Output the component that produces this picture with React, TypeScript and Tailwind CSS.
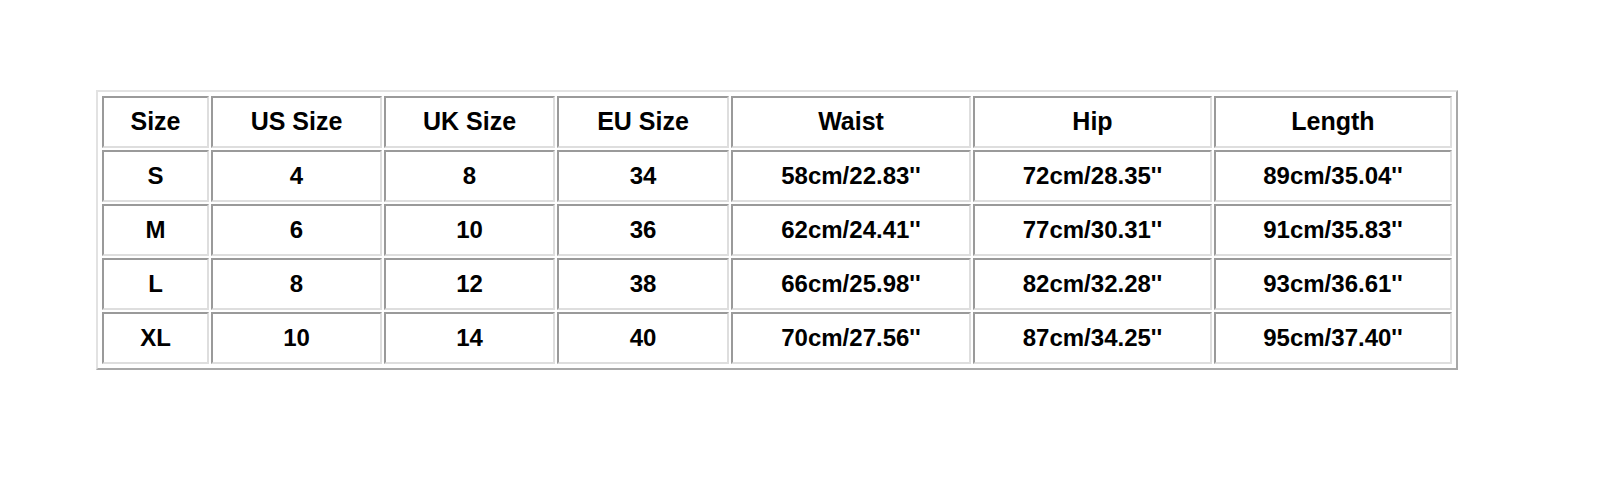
import React from "react";

const headers = ["Size", "US Size", "UK Size", "EU Size", "Waist", "Hip", "Length"];
const widths = ["w-[107px]", "w-[171px]", "w-[171px]", "w-[172px]", "w-[240px]", "w-[239px]", "w-[238px]"];
const rows = [
  ["S", "4", "8", "34", "58cm/22.83''", "72cm/28.35''", "89cm/35.04''"],
  ["M", "6", "10", "36", "62cm/24.41''", "77cm/30.31''", "91cm/35.83''"],
  ["L", "8", "12", "38", "66cm/25.98''", "82cm/32.28''", "93cm/36.61''"],
  ["XL", "10", "14", "40", "70cm/27.56''", "87cm/34.25''", "95cm/37.40''"],
];

const cell =
  "h-[52px] p-0 text-center align-middle border-2 border-t-[#9a9a9a] border-l-[#9a9a9a] border-b-[#dedede] border-r-[#dedede]";

export default function App() {
  return (
    <div className="w-[1600px] h-[493px] bg-white pt-[90px] pl-[96px] font-['Liberation_Sans',Arial,sans-serif] text-black">
      <table className="w-[1360px] table-fixed border-separate border-spacing-[2px] p-0.5 border-2 border-t-[#e2e2e2] border-l-[#e2e2e2] border-b-[#a8a8a8] border-r-[#a8a8a8]">
        <tbody>
          <tr>
            {headers.map((h, i) => (
              <td key={h} className={`${cell} ${widths[i]} text-[25px] font-bold`}>
                {h}
              </td>
            ))}
          </tr>
          {rows.map((r) => (
            <tr key={r[0]}>
              {r.map((v, i) => (
                <td key={i} className={`${cell} text-[24px] font-bold`}>
                  {v}
                </td>
              ))}
            </tr>
          ))}
        </tbody>
      </table>
    </div>
  );
}
